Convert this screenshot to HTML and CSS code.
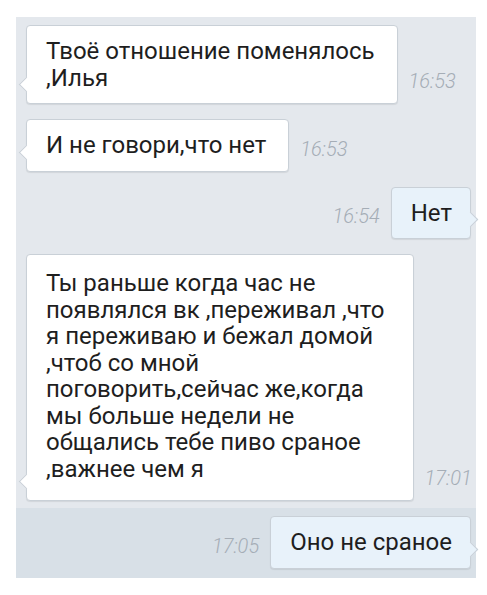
FILE: index.html
```html
<!DOCTYPE html>
<html lang="ru">
<head>
    <meta charset="UTF-8">
    <meta name="viewport" content="width=device-width, initial-scale=1.0">
    <title>Диалог</title>
    <link rel="stylesheet" href="styles.css">
</head>
<body>
    <div class="chat">
        <!-- incoming -->
        <div class="row">
            <div class="bubble in">Твоё отношение поменялось<br>,Илья</div>
            <span class="time">16:53</span>
        </div>
        <div class="row">
            <div class="bubble in">И не говори,что нет</div>
            <span class="time">16:53</span>
        </div>

        <!-- outgoing -->
        <div class="row out">
            <span class="time">16:54</span>
            <div class="bubble out">Нет</div>
        </div>

        <div class="row">
            <div class="bubble in long">Ты раньше когда час не<br>появлялся вк ,переживал ,что<br>я переживаю и бежал домой<br>,чтоб со мной<br>поговорить,сейчас же,когда<br>мы больше недели не<br>общались тебе пиво сраное<br>,важнее чем я</div>
            <span class="time">17:01</span>
        </div>

        <div class="row out selected">
            <span class="time">17:05</span>
            <div class="bubble out">Оно не сраное</div>
        </div>
    </div>
</body>
</html>
```

FILE: styles.css
```css
body {
    margin: 0;
    background: #fff;
    font-family: Roboto, "Noto Sans", sans-serif;
}
.chat {
    margin: 17px 11px 18px 16px;
    background: #e4e8ed;
}
.row {
    display: flex;
    align-items: flex-end;
    gap: 11px;
    padding: 8px 5px 7px 10px;
}
.row.out {
    justify-content: flex-end;
}
.row.selected {
    background: #d8e0e7;
    padding-bottom: 9px;
}
.bubble {
    position: relative;
    padding: 12px 22px 12px 19px;
    font-size: 24px;
    line-height: 26.5px;
    color: #1e1e1e;
    border: 1px solid #c9d0d7;
    border-radius: 4px;
    box-shadow: 0 1px 1px rgba(0, 0, 0, 0.08);
    white-space: nowrap;
}
.bubble.in {
    background: #fff;
}
.bubble.long {
    padding-right: 28px;
    padding-top: 15px;
    padding-bottom: 18px;
}
.bubble.out {
    background: #e8f2fa;
    padding-right: 18px;
}
.bubble::after {
    content: "";
    position: absolute;
    bottom: 13px;
    width: 10px;
    height: 10px;
    background: inherit;
    transform: rotate(45deg);
}
.bubble.in::after {
    left: -6px;
    border-left: 1px solid #c9d0d7;
    border-bottom: 1px solid #c9d0d7;
}
.bubble.out::after {
    right: -6px;
    border-top: 1px solid #c9d0d7;
    border-right: 1px solid #c9d0d7;
}
.time {
    margin-bottom: 13px;
    font-size: 20px;
    line-height: 20px;
    font-style: italic;
    font-weight: 300;
    color: #a5adb6;
}
```
